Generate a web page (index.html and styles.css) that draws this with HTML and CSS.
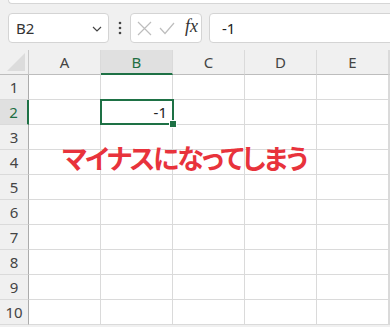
FILE: index.html
```html
<!DOCTYPE html>
<html lang="ja">
<head>
    <meta charset="UTF-8">
    <meta name="viewport" content="width=device-width, initial-scale=1.0">
    <title>マイナス</title>
    <link rel="stylesheet" href="styles.css">
</head>
<body>
<div class="ribbon-edge"></div>

<div class="formula-bar">
    <div class="name-box">
        <span>B2</span>
        <svg class="chevron" width="10" height="6" viewBox="0 0 10 6"><path d="M1 1 L5 5 L9 1" fill="none" stroke="#444" stroke-width="1.2"/></svg>
    </div>
    <div class="dots">
        <svg width="4" height="14" viewBox="0 0 4 14"><circle cx="2" cy="2" r="1.3" fill="#444"/><circle cx="2" cy="7" r="1.3" fill="#444"/><circle cx="2" cy="12" r="1.3" fill="#444"/></svg>
    </div>
    <div class="fx-box">
        <svg width="15" height="15" viewBox="0 0 15 15"><path d="M1 1 L14 14 M14 1 L1 14" stroke="#bdbdbd" stroke-width="1.2"/></svg>
        <svg width="16" height="13" viewBox="0 0 16 13"><path d="M1 6 L6 11.5 L15 1" fill="none" stroke="#bdbdbd" stroke-width="1.2"/></svg>
        <i class="fx">fx</i>
    </div>
    <div class="formula-input">-1</div>
</div>

<div class="sheet">
    <div class="grid">
        <div class="corner">
            <svg width="18" height="18" viewBox="0 0 18 18"><path d="M18 0 L18 18 L0 18 Z" fill="#dcdcdc"/></svg>
        </div>
        <div class="col-head">A</div>
        <div class="col-head active">B</div>
        <div class="col-head">C</div>
        <div class="col-head">D</div>
        <div class="col-head">E</div>
        <div class="col-head"></div>

        <div class="row-head">1</div>
        <div class="cell"></div><div class="cell"></div><div class="cell"></div><div class="cell"></div><div class="cell"></div><div class="cell"></div>

        <div class="row-head active">2</div>
        <div class="cell"></div><div class="cell selected">-1</div><div class="cell"></div><div class="cell"></div><div class="cell"></div><div class="cell"></div>

        <div class="row-head">3</div>
        <div class="cell"></div><div class="cell"></div><div class="cell"></div><div class="cell"></div><div class="cell"></div><div class="cell"></div>

        <div class="row-head">4</div>
        <div class="cell"></div><div class="cell"></div><div class="cell"></div><div class="cell"></div><div class="cell"></div><div class="cell"></div>

        <div class="row-head">5</div>
        <div class="cell"></div><div class="cell"></div><div class="cell"></div><div class="cell"></div><div class="cell"></div><div class="cell"></div>

        <div class="row-head">6</div>
        <div class="cell"></div><div class="cell"></div><div class="cell"></div><div class="cell"></div><div class="cell"></div><div class="cell"></div>

        <div class="row-head">7</div>
        <div class="cell"></div><div class="cell"></div><div class="cell"></div><div class="cell"></div><div class="cell"></div><div class="cell"></div>

        <div class="row-head">8</div>
        <div class="cell"></div><div class="cell"></div><div class="cell"></div><div class="cell"></div><div class="cell"></div><div class="cell"></div>

        <div class="row-head">9</div>
        <div class="cell"></div><div class="cell"></div><div class="cell"></div><div class="cell"></div><div class="cell"></div><div class="cell"></div>

        <div class="row-head">10</div>
        <div class="cell"></div><div class="cell"></div><div class="cell"></div><div class="cell"></div><div class="cell"></div><div class="cell"></div>
    </div>

    <div class="note">マイナスになってしまう</div>
</div>
</body>
</html>
```

FILE: styles.css
```css
body {
    margin: 0;
    background-color: #f0f0f0;
    font-family: "Noto Sans", "Noto Sans CJK JP", sans-serif;
    color: #333;
    overflow: hidden;
}

.ribbon-edge {
    height: 4px;
    margin-left: 8px;
    background-color: #fff;
    border: 1px solid #d6d6d6;
    border-top: none;
    border-right: none;
    border-bottom-left-radius: 6px;
    box-sizing: border-box;
}

/* formula bar */
.formula-bar {
    display: flex;
    align-items: stretch;
    height: 30px;
    padding: 9px 0 7px 8px;
}

.name-box {
    width: 101px;
    box-sizing: border-box;
    display: flex;
    align-items: center;
    justify-content: space-between;
    padding: 0 6px 0 7px;
    background-color: #fff;
    border: 1px solid #d4d4d4;
    border-radius: 4px;
    font-size: 15px;
    color: #333;
}

.chevron {
    margin-top: 1px;
}

.dots {
    width: 21px;
    display: flex;
    align-items: center;
    justify-content: center;
}

.fx-box {
    width: 72px;
    box-sizing: border-box;
    display: flex;
    align-items: center;
    gap: 7px;
    padding-left: 6px;
    background-color: #fff;
    border: 1px solid #d4d4d4;
    border-radius: 4px;
}

.fx {
    font-family: "Liberation Serif", serif;
    font-size: 18px;
    color: #333;
    margin-left: 3px;
    margin-top: -3px;
}

.formula-input {
    flex: 1;
    margin-left: 7px;
    margin-right: -6px;
    padding-left: 12px;
    display: flex;
    align-items: center;
    background-color: #fff;
    border: 1px solid #d4d4d4;
    border-radius: 4px;
    font-size: 15px;
    color: #222;
}

/* sheet */
.sheet {
    position: relative;
    background-color: #fff;
}

.grid {
    display: grid;
    grid-template-columns: 29px repeat(5, 72px) 1fr;
    grid-auto-rows: 25px;
}

.grid > div {
    box-sizing: border-box;
    border-right: 1px solid #dadada;
    border-bottom: 1px solid #dadada;
}

.corner {
    background-color: #f0f0f0;
    display: flex;
    align-items: flex-end;
    justify-content: flex-end;
    padding: 0 3px 3px 0;
}

.grid .corner {
    border-right-color: #c8c8c8;
    border-bottom-color: #bdbdbd;
}

.col-head {
    background-color: #f0f0f0;
    display: flex;
    align-items: center;
    justify-content: center;
    font-size: 15px;
    color: #444;
}

.grid .col-head {
    border-bottom-color: #bdbdbd;
}

.grid .col-head.active {
    background-color: #e0e0e0;
    color: #1e6e42;
    border-bottom: 2px solid #1e7145;
}

.row-head {
    background-color: #f0f0f0;
    display: flex;
    align-items: center;
    justify-content: center;
    font-size: 15px;
    color: #444;
}

.grid .row-head {
    border-right-color: #ababab;
}

.grid .row-head.active {
    background-color: #e0e0e0;
    color: #1e6e42;
    border-right: 2px solid #1e7145;
}

.cell {
    font-size: 15px;
    color: #222;
}

.cell.selected {
    position: relative;
    display: flex;
    align-items: center;
    justify-content: flex-end;
    padding-right: 5px;
}

.cell.selected::before {
    content: '';
    position: absolute;
    left: -1px;
    top: -1px;
    right: -2px;
    bottom: -1px;
    border: 2px solid #1e7145;
}

.cell.selected::after {
    content: '';
    position: absolute;
    right: -5px;
    bottom: -4px;
    width: 6px;
    height: 6px;
    background-color: #1e7145;
    border: 1px solid #fff;
}

.note {
    position: absolute;
    left: 62px;
    top: 88px;
    font-family: "Noto Sans CJK JP", sans-serif;
    font-weight: 700;
    font-size: 27px;
    font-feature-settings: "palt";
    letter-spacing: -2px;
    color: #e8333c;
    white-space: nowrap;
}
```
